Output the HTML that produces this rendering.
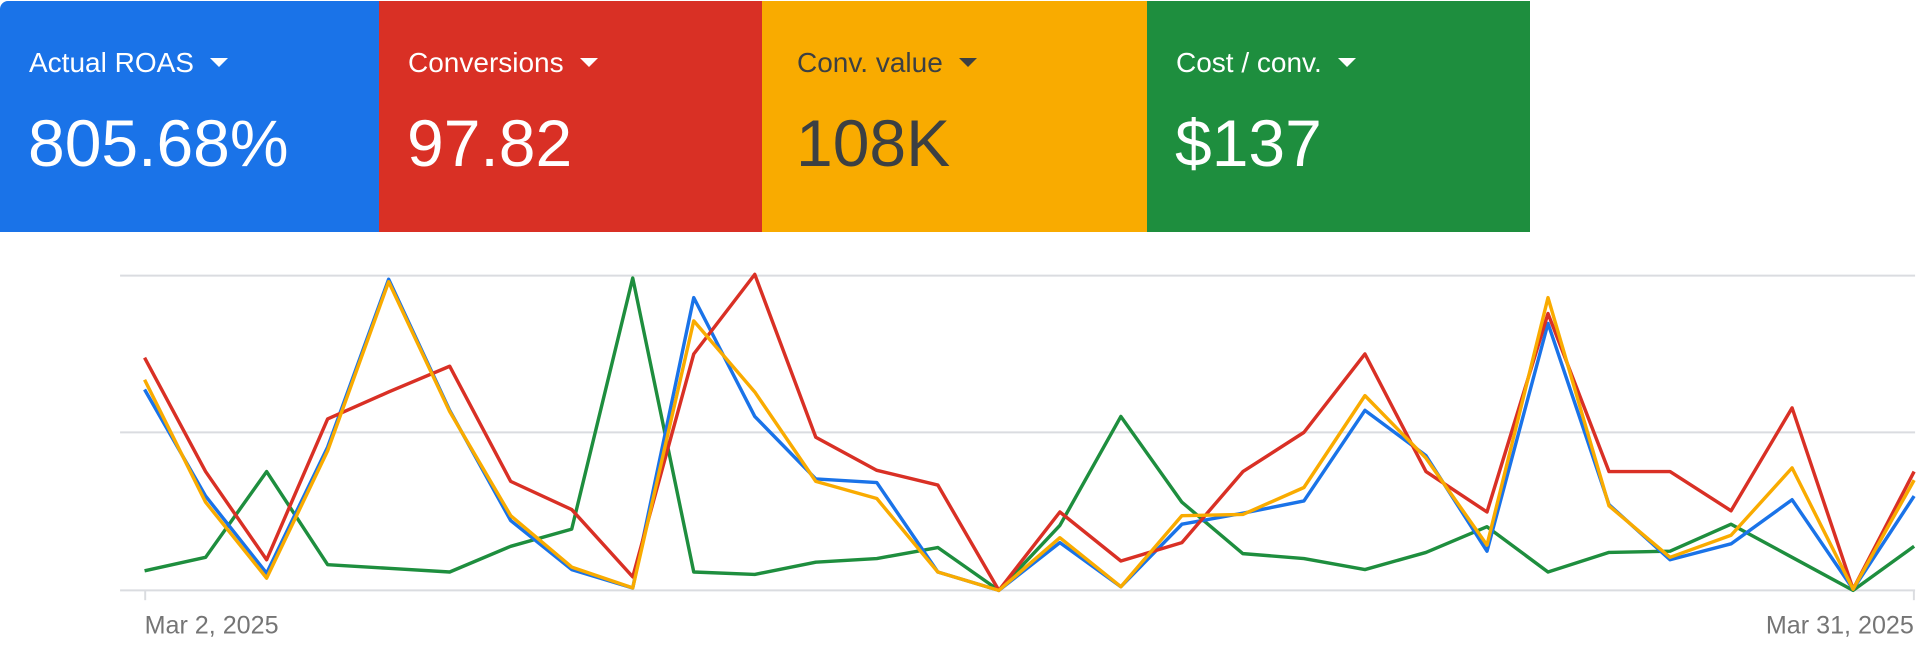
<!DOCTYPE html>
<html><head><style>
html,body{margin:0;padding:0;width:1920px;height:670px;background:#fff;overflow:hidden;font-family:"Liberation Sans",Arial,sans-serif}
.t{position:absolute;top:1px;height:231px;width:384px;color:#fff}
.t .h{position:absolute;left:29px;top:46px;font-size:28px;white-space:nowrap}
.t .h .a{display:inline-block;width:0;height:0;border-left:9px solid transparent;border-right:9px solid transparent;border-top:9px solid currentColor;margin-left:16px;vertical-align:middle;position:relative;top:-2px}
.t .v{position:absolute;left:28px;top:104px;font-size:66px;white-space:nowrap}
</style></head><body>
<div class="t" style="left:0;background:#1a73e8;width:379px;border-top-left-radius:8px"><div class="h">Actual ROAS<span class="a"></span></div><div class="v">805.68%</div></div>
<div class="t" style="left:379px;background:#d93025;width:383px"><div class="h">Conversions<span class="a"></span></div><div class="v">97.82</div></div>
<div class="t" style="left:762px;background:#f9ab00;width:385px;color:#3c4043"><div class="h" style="left:35px">Conv. value<span class="a"></span></div><div class="v" style="left:34px">108K</div></div>
<div class="t" style="left:1147px;background:#1e8e3e;width:383px"><div class="h">Cost / conv.<span class="a"></span></div><div class="v">$137</div></div>
<svg style="position:absolute;left:0;top:0" width="1920" height="670" viewBox="0 0 1567 547" preserveAspectRatio="none">
<g stroke="#dadce0" stroke-width="1.6"><line x1="98" y1="225" x2="1563" y2="225"/><line x1="98" y1="353" x2="1563" y2="353"/><line x1="98" y1="482" x2="1563" y2="482"/><line x1="118.5" y1="482" x2="118.5" y2="490"/><line x1="1562" y1="482" x2="1562" y2="490"/></g>
<g fill="none" stroke-width="2.8" stroke-linejoin="round" id="g"></g>
<text x="118" y="517" font-size="20.5" fill="#757575" font-family="Liberation Sans,Arial,sans-serif">Mar 2, 2025</text>
<text x="1562" y="517" font-size="20.5" fill="#757575" text-anchor="end" font-family="Liberation Sans,Arial,sans-serif">Mar 31, 2025</text>
</svg>
<script>
var D=[["#1e8e3e",[466,455,385,461,464,467,446,432,227,467,469,459,456,447,482,429,340,410,452,456,465,451,430,467,451,450,428,455,482,446]],
["#1a73e8",[318,405,468,365,228,335,425,465,480,243,340,391,394,467,482,443,479,428,419,409,335,372,450,264,412,457,444,408,481,405]],
["#d93025",[292,385,457,342,320,299,393,416,471,289,224,357,384,396,482,418,458,443,385,353,289,385,418,256,385,385,417,333,481,385]],
["#f9ab00",[310,410,472,368,230,336,421,463,480,262,320,393,407,467,482,439,479,421,420,398,323,374,445,243,413,455,437,382,481,392]]];
var g=document.getElementById('g'),h='';
D.forEach(function(d){h+='<polyline stroke="'+d[0]+'" points="'+d[1].map(function(y,i){return (118+49.8*i).toFixed(1)+','+y}).join(' ')+'"/>'});
g.innerHTML=h;
</script>
</body></html>
